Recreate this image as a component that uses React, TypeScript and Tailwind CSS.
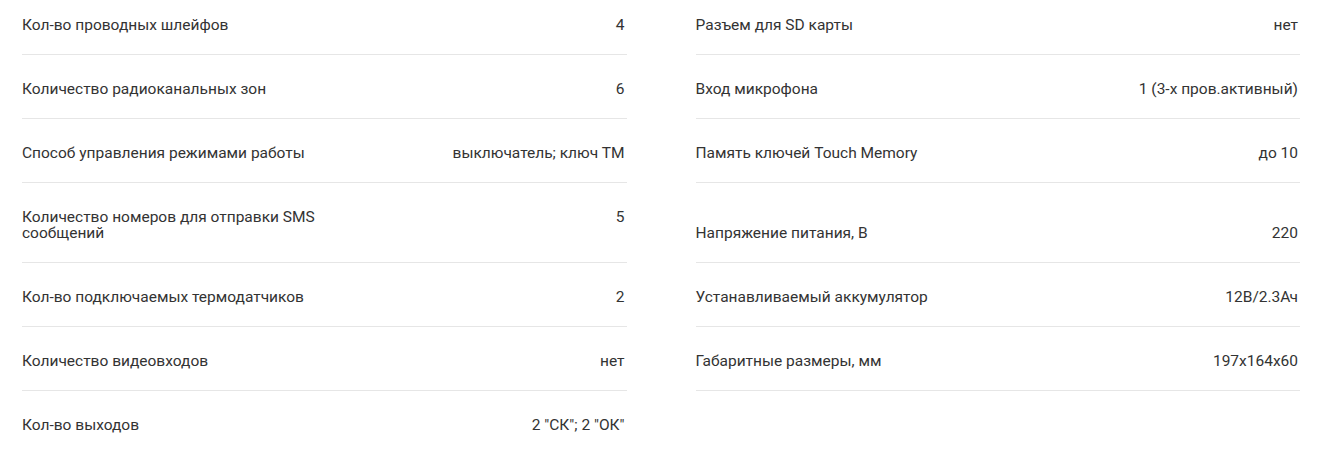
const specs: [string, string][] = [
  ["Кол-во проводных шлейфов", "4"],
  ["Разъем для SD карты", "нет"],
  ["Количество радиоканальных зон", "6"],
  ["Вход микрофона", "1 (3-х пров.активный)"],
  ["Способ управления режимами работы", "выключатель; ключ ТМ"],
  ["Память ключей Touch Memory", "до 10"],
  ["Количество номеров для отправки SMS сообщений", "5"],
  ["Напряжение питания, В", "220"],
  ["Кол-во подключаемых термодатчиков", "2"],
  ["Устанавливаемый аккумулятор", "12В/2.3Ач"],
  ["Количество видеовходов", "нет"],
  ["Габаритные размеры, мм", "197x164x60"],
  ["Кол-во выходов", '2 "СК"; 2 "ОК"'],
];

function SpecRow({ label, value, last }: { label: string; value: string; last?: boolean }) {
  return (
    <div
      className={
        "flex flex-col justify-end pt-[26px] pb-[21px] " +
        (last ? "" : "border-b border-[#e6e6e6]")
      }
    >
      <div className="flex items-start justify-between gap-4">
        <span className="max-w-[335px]">{label}</span>
        <span className="text-right whitespace-nowrap pr-[2px]">{value}</span>
      </div>
    </div>
  );
}

export default function App() {
  return (
    <div
      className="min-h-[455px] w-full overflow-hidden bg-white text-[15.5px] leading-[16px] text-[#333333]"
      style={{ fontFamily: "Roboto, 'Liberation Sans', sans-serif" }}
    >
      <div className="ml-[22px] mt-[-9px] grid w-[1278px] grid-cols-2 gap-x-[69px]">
        {specs.map(([label, value], i) => (
          <SpecRow key={i} label={label} value={value} last={i === specs.length - 1} />
        ))}
      </div>
    </div>
  );
}
